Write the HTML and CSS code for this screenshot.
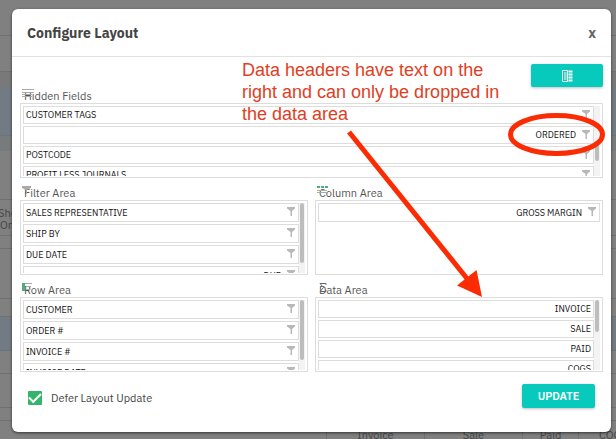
FILE: index.html
```html
<!DOCTYPE html>
<html lang="en">
<head>
<meta charset="utf-8">
<title>Configure Layout</title>
<link rel="stylesheet" href="styles.css">
</head>
<body>
<svg class="symbols" aria-hidden="true">
  <symbol id="funnel" viewBox="0 0 8 9"><path d="M0 0H8V1.5L5 4V9H3.5V4L0 1.5Z"/></symbol>
</svg>
<div class="page" aria-hidden="true">
  <div class="band b1"></div>
  <div class="band b2"></div>
  <div class="band b3"></div>
  <div class="band b4 selected"></div>
  <div class="band b5"></div>
  <div class="band b6"></div>
  <div class="band b7">Sho<br>Onl</div>
  <div class="band b8"></div>
  <div class="band b9"></div>
  <div class="band b10"></div>
  <div class="band b11 selected"></div>
  <div class="band b12"></div>
  <div class="band b13"></div>
  <div class="band b14"></div>
  <div class="band heads"><span></span><span>Invoice</span><span>Sale</span><span>Paid</span><span>COGS</span></div>
</div>

<main class="overlay">
  <section class="dialog" role="dialog" aria-labelledby="title">
    <header class="head">
      <h1 id="title">Configure Layout</h1>
      <button class="close" type="button" aria-label="Close">x</button>
    </header>
    <div class="body">
      <div class="tools">
        <button class="btn layout" type="button" aria-label="Choose arrangement">
          <svg width="11" height="12" viewBox="0 0 11 12" fill="none" stroke="#fff"><path d="M.5 .5H5.5V11.5H.5ZM2 3H4.500M2 5H4.500M2 7H4.500M2 9H4.500"/><path d="M6.500 1.500H10.500M6.500 4.500H10.500M6.500 7.500H10.500M6.500 10.500H10.500" stroke-width="2"/></svg>
        </button>
      </div>
      <div class="areas">
        <section class="area wide">
          <h2><svg class="mark" width="12" height="9" stroke="#aaa"><path d="M0 .5H12M0 3.500H12M0 5.500H10M0 7.500H10"/></svg>Hidden Fields</h2>
          <div class="box">
            <ul class="list tight">
              <li>CUSTOMER TAGS<svg class="funnel"><use href="#funnel"/></svg></li>
              <li class="data">ORDERED<svg class="funnel"><use href="#funnel"/></svg></li>
              <li>POSTCODE<svg class="funnel"><use href="#funnel"/></svg></li>
              <li>PROFIT LESS JOURNALS<svg class="funnel"><use href="#funnel"/></svg></li>
            </ul>
            <div class="track"><div class="thumb low"></div></div>
          </div>
        </section>
        <section class="area">
          <h2><svg class="mark" width="9" height="8" fill="#aaa"><path d="M0 0H9V2L5 4V8H4V4L0 2Z"/></svg>Filter Area</h2>
          <div class="box">
            <ul class="list">
              <li>SALES REPRESENTATIVE<svg class="funnel"><use href="#funnel"/></svg></li>
              <li>SHIP BY<svg class="funnel"><use href="#funnel"/></svg></li>
              <li>DUE DATE<svg class="funnel"><use href="#funnel"/></svg></li>
              <li class="data">DUE<svg class="funnel"><use href="#funnel"/></svg></li>
            </ul>
            <div class="track"><div class="thumb long"></div></div>
          </div>
        </section>
        <section class="area">
          <h2><svg class="mark" width="11" height="8" fill="none"><path d="M0 1H11" stroke="#48b277" stroke-width="2" stroke-dasharray="3 1"/><path d="M0 4.500H10M0 6.500H10" stroke="#aaa"/></svg>Column Area</h2>
          <div class="box">
            <ul class="list">
              <li class="data">GROSS MARGIN<svg class="funnel"><use href="#funnel"/></svg></li>
            </ul>
          </div>
        </section>
        <section class="area">
          <h2><svg class="mark" width="10" height="8" fill="none"><path d="M1.500 0V8" stroke="#48b277" stroke-width="3"/><path d="M3 .5H10M4 3.500H9M4 6.500H8" stroke="#aaa"/></svg>Row Area</h2>
          <div class="box">
            <ul class="list">
              <li>CUSTOMER<svg class="funnel"><use href="#funnel"/></svg></li>
              <li>ORDER #<svg class="funnel"><use href="#funnel"/></svg></li>
              <li>INVOICE #<svg class="funnel"><use href="#funnel"/></svg></li>
              <li>INVOICE DATE<svg class="funnel"><use href="#funnel"/></svg></li>
            </ul>
            <div class="track"><div class="thumb long"></div></div>
          </div>
        </section>
        <section class="area">
          <h2><svg class="mark sum" width="8" height="9" fill="none" stroke="#666"><path d="M7 2V.5H1L4.500 4.500L1 8.500H7V7"/></svg>Data Area</h2>
          <div class="box">
            <ul class="list tight plain">
              <li class="data">INVOICE</li>
              <li class="data">SALE</li>
              <li class="data">PAID</li>
              <li class="data">COGS</li>
            </ul>
            <div class="track"><div class="thumb"></div></div>
          </div>
        </section>
      </div>
      <footer class="foot">
        <label class="defer"><input type="checkbox" checked>Defer Layout Update</label>
        <button class="btn update" type="button">UPDATE</button>
      </footer>
    </div>
  </section>
</main>

<p class="note">Data headers have text on the<br>right and can only be dropped in<br>the data area</p>
<svg class="drawing" width="616" height="439" aria-hidden="true">
  <path d="M349 132L469 281" stroke="#fb2c03" stroke-width="5"/>
  <path d="M482 297L457 285.500L476.500 270Z" fill="#fb2c03"/>
  <ellipse cx="556.500" cy="134.500" rx="46" ry="19" fill="none" stroke="#fb2c03" stroke-width="5"/>
</svg>
</body>
</html>
```
FILE: styles.css
```css
* { box-sizing: border-box; }
body {
  margin: 0;
  min-height: 100vh;
  position: relative;
  overflow: hidden;
  background: #808080;
  color: #444;
  font-family: "IBM Plex Sans", "Noto Sans", sans-serif;
}
h1, h2, ul, p { margin: 0; padding: 0; font-weight: normal; }
button { font-family: inherit; border: 0; padding: 0; }
.symbols { position: absolute; width: 0; height: 0; }

.page {
  position: absolute;
  inset: 0;
  overflow: hidden;
  color: #444;
  font-size: 11px;
  line-height: 12px;
}
.band { border-bottom: 1px solid #707070; }
.band.selected { background: #727a83; border-color: #6c737b; }
.b1 { height: 36px; }
.b2 { height: 36px; }
.b3 { height: 15px; background: #797979; border-color: #797979; }
.b4 { height: 49px; }
.b5 { height: 15px; background: #787b7b; border-color: #787b7b; }
.b6 { height: 49px; }
.b7 { height: 36px; padding-top: 7px; text-indent: -2px; }
.b8 { height: 13px; }
.b9 { height: 50px; }
.b10 { height: 18px; }
.b11 { height: 34px; }
.b12 { height: 23px; }
.b13 { height: 34px; }
.b14 { height: 13px; }
.heads {
  display: grid;
  grid-template-columns: 326fr 98fr 98fr 56fr 38fr;
  height: 28px;
  text-align: center;
  line-height: 28px;
}
.heads span { min-width: 0; }
.heads span + span { border-left: 1px solid #707070; }
.heads span:last-child { padding-left: 20px; }

.overlay { position: relative; padding: 9px 5px 7px 12px; }
.dialog {
  background: #fff;
  border-radius: 6px;
  box-shadow: 0 1px 3px rgba(0, 0, 0, .6);
}
.head {
  display: flex;
  align-items: center;
  justify-content: space-between;
  height: 48px;
  padding: 0 15px;
  border-bottom: 1px solid #e2e2e2;
}
h1 { font-size: 14px; font-weight: 700; line-height: 18px; color: #444; }
.close {
  background: none;
  color: #666;
  font-size: 14px;
  font-weight: 700;
  line-height: 18px;
}
.body { padding: 7px 8px 24px; }
.tools { display: flex; justify-content: flex-end; }
.btn {
  display: flex;
  align-items: center;
  justify-content: center;
  height: 24px;
  border-radius: 2px;
  background: #08cabc;
  color: #fff;
  box-shadow: 0 1px 3px rgba(0, 0, 0, .25);
}
.layout { width: 72px; height: 23px; }

.areas { display: grid; grid-template-columns: 1fr 1fr; column-gap: 7px; row-gap: 6px; }
.wide { grid-column: 1 / -1; }
h2 {
  position: relative;
  padding: 1px 0 0 4px;
  height: 16px;
  font-size: 11px;
  line-height: 16px;
  color: #555;
}
.mark { position: absolute; left: 2px; top: 2px; }
.mark.sum { left: 4px; }
.box {
  display: flex;
  height: 75px;
  padding: 2px 2px 1px;
  border: 1px solid #ddd;
  overflow: hidden;
}
.list {
  display: flex;
  flex-direction: column;
  flex: 1;
  gap: 2px;
  list-style: none;
  overflow: hidden;
}
.list li {
  display: flex;
  flex: none;
  align-items: center;
  justify-content: space-between;
  gap: 6px;
  height: 19px;
  padding: 0 3px 0 2px;
  border: 1px solid #ddd;
  color: #111;
  font-size: 9px;
  line-height: 16px;
}
.list.tight li { height: 18px; }
.list.plain li { padding-right: 2px; }
.list li.data { justify-content: flex-end; }
.funnel { width: 8px; height: 9px; fill: #b8b8b8; margin-bottom: 2px; }
.track { width: 6px; background: #f3f3f3; }
.thumb { width: 4px; height: 32px; margin: 0 auto; border-radius: 2px; background: #bdbdbd; }
.thumb.long { height: 60px; }
.thumb.low { height: 17px; margin-top: 38px; }

.foot {
  display: flex;
  align-items: center;
  justify-content: space-between;
  padding: 12px 8px 0;
}
.defer { display: flex; align-items: center; gap: 9px; font-size: 11px; line-height: 16px; padding-top: 4px; }
.defer input {
  appearance: none;
  width: 14px;
  height: 14px;
  margin: 0;
  border-radius: 1px;
  background: #35b46c;
  display: grid;
  place-items: center;
}
.defer input::before {
  content: "";
  width: 10px;
  height: 5px;
  margin-bottom: 3px;
  border: solid #fff;
  border-width: 0 0 2px 2px;
  rotate: -45deg;
}
.update { width: 73px; font-size: 11px; font-weight: 600; }

.note {
  position: absolute;
  left: 242px;
  top: 59px;
  color: #e0401f;
  font: 18px/22px "Liberation Sans", sans-serif;
  white-space: nowrap;
}
.drawing { position: absolute; left: 0; top: 0; }
```
